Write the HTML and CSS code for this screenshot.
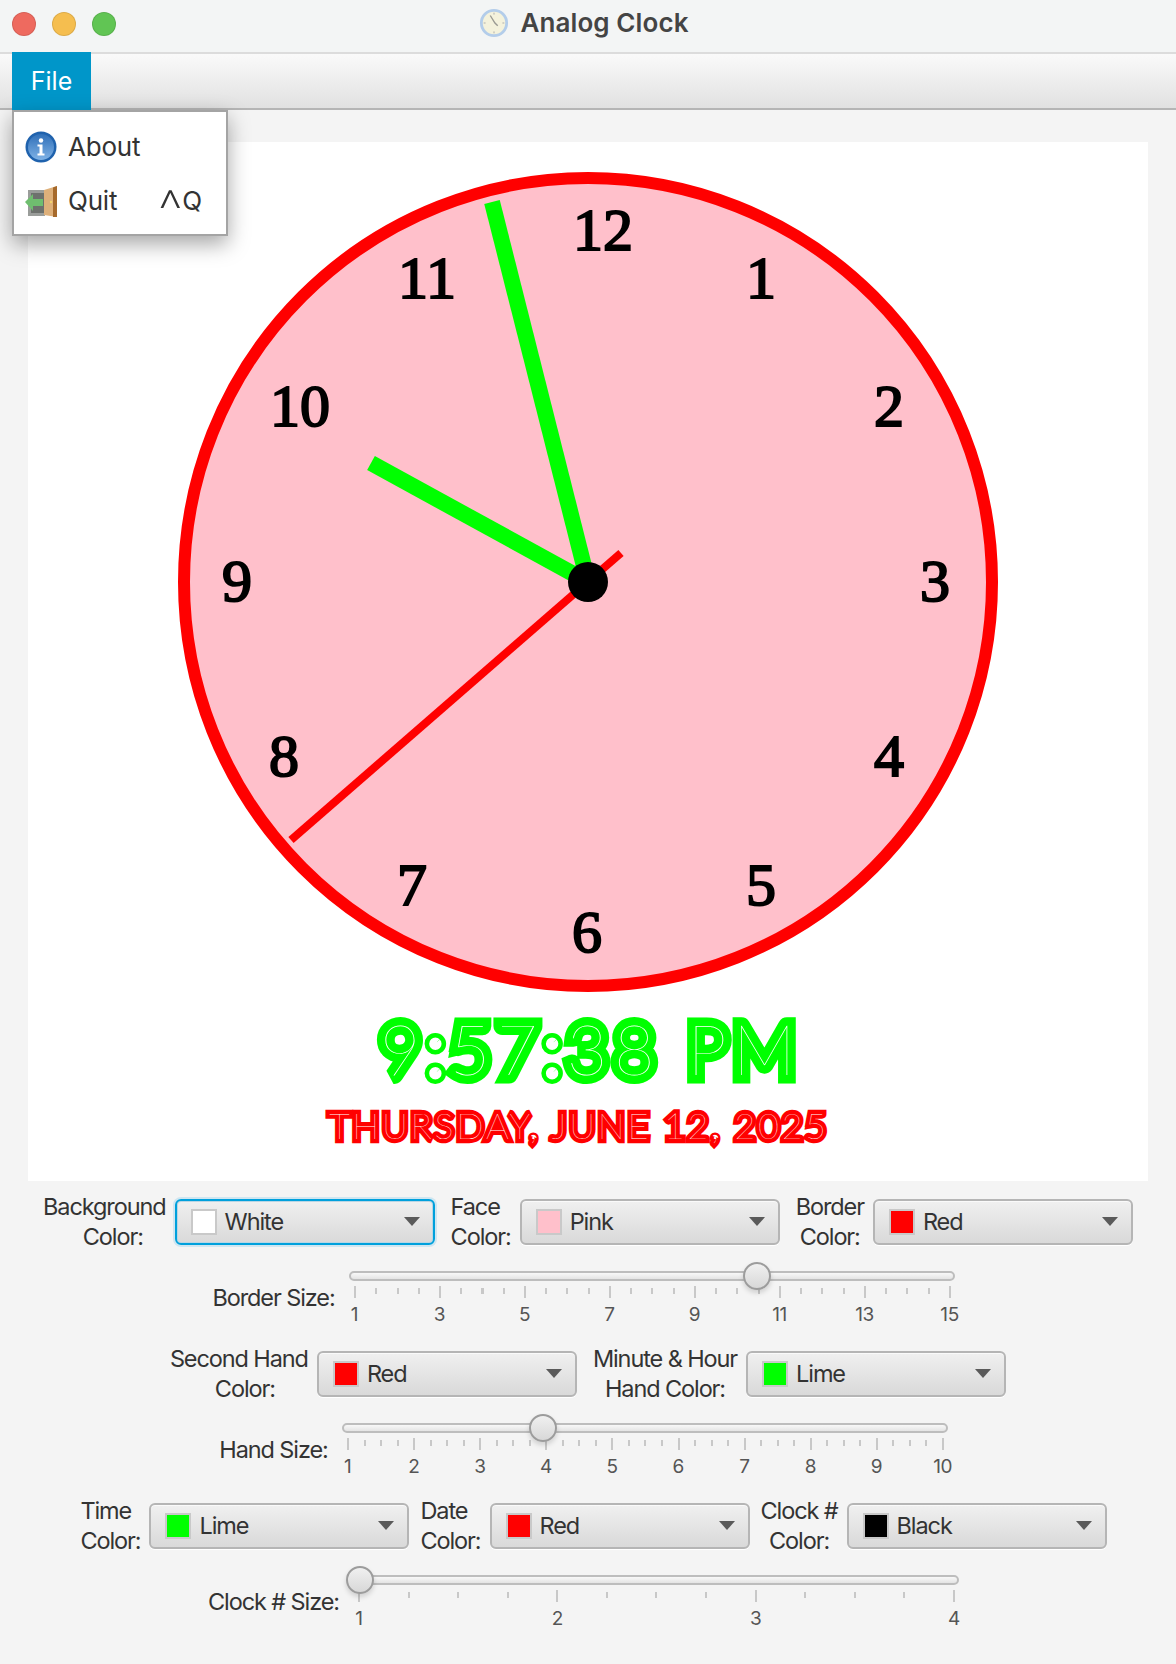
FILE: index.html
```html
<!doctype html>
<html lang="en">
<head>
	<meta charset="utf-8">
	<title>Analog Clock</title>
	<link rel="stylesheet" href="styles.css">
</head>
<body>
	<header class="titlebar">
		<div class="lights">
			<span class="light red"></span>
			<span class="light yellow"></span>
			<span class="light green"></span>
		</div>
		<div class="title">
			<svg class="title-icon" viewBox="0 0 32 32">
				<circle cx="16" cy="16" r="13.5" fill="#f4f2dc" stroke="#b3cdea" stroke-width="3"/>
				<path d="M12 8l5 8 3 3" fill="none" stroke="#9a9a92" stroke-width="1.5"/>
				<path d="M16 5v2M16 25v2M5 16h2M25 16h2" stroke="#aaa" stroke-width="1"/>
			</svg>
			Analog Clock
		</div>
	</header>

	<nav class="menubar">
		<div class="menu-item">File</div>
	</nav>

	<div class="menu">
		<div class="menu-row">
			<svg class="menu-icon" viewBox="0 0 32 32">
				<defs>
					<linearGradient id="info" x1="0" y1="0" x2="0" y2="1">
						<stop offset="0" stop-color="#2f6fb8"/>
						<stop offset="1" stop-color="#7fb2e6"/>
					</linearGradient>
				</defs>
				<circle cx="16" cy="16" r="15.5" fill="#1f62ad"/>
				<circle cx="16" cy="16" r="13" fill="url(#info)"/>
				<circle cx="16" cy="9.5" r="2.2" fill="#fff"/>
				<path d="M12.5 13.5h5v9h2v2h-7v-2h2v-7h-2z" fill="#fff"/>
			</svg>
			<span>About</span>
		</div>
		<div class="menu-row">
			<svg class="menu-icon" viewBox="0 0 32 32">
				<rect x="3" y="5" width="17" height="26" fill="#9a9d9a"/>
				<rect x="6" y="8" width="13" height="20" fill="#6d716d"/>
				<path d="M19 5l13-4v31l-13-2z" fill="#deb07a"/>
				<path d="M28 2.500l4-1.500v31h-4z" fill="#a66a2c"/>
				<circle cx="26" cy="17" r="1.200" fill="#f3d36b"/>
				<path d="M0 17l8-8v5h10v7H8v5z" fill="#6fbe6f"/>
			</svg>
			<span class="menu-label">Quit</span>
			<span class="shortcut"><span class="caret">^</span>Q</span>
		</div>
	</div>

	<main class="content">
		<section class="clock-panel">
			<svg class="clock" viewBox="0 0 820 820">
				<circle class="face" cx="410" cy="410" r="404"/>
				<text class="num" x="425" y="78">12</text>
				<text class="num" x="583" y="126">1</text>
				<text class="num" x="711" y="254">2</text>
				<text class="num" x="757" y="429">3</text>
				<text class="num" x="711" y="604">4</text>
				<text class="num" x="583" y="733">5</text>
				<text class="num" x="409" y="780">6</text>
				<text class="num" x="234" y="733">7</text>
				<text class="num" x="106" y="604">8</text>
				<text class="num" x="59" y="429">9</text>
				<text class="num" x="122" y="254">10</text>
				<text class="num" x="249" y="126">11</text>
				<line class="hand" x1="410" y1="410" x2="314" y2="30"/>
				<line class="hand" x1="410" y1="410" x2="193" y2="291"/>
				<line class="second" x1="443" y1="381" x2="113" y2="668"/>
				<circle cx="410" cy="410" r="20"/>
			</svg>
			<svg class="readout" viewBox="0 0 1120 170">
				<text class="time" x="563" y="83">9:57:38 PM</text>
				<text class="date" x="551" y="147">THURSDAY, JUNE 12, 2025</text>
			</svg>
		</section>

		<section class="controls">
			<div class="combo-row">
				<label class="field">
					<span class="caption">Background<br><span class="shift">Color:</span></span>
					<span class="combo focused"><i class="swatch white"></i>White<b class="arrow"></b></span>
				</label>
				<label class="field">
					<span class="caption left">Face<br>Color:</span>
					<span class="combo"><i class="swatch pink"></i>Pink<b class="arrow"></b></span>
				</label>
				<label class="field">
					<span class="caption">Border<br>Color:</span>
					<span class="combo"><i class="swatch red"></i>Red<b class="arrow"></b></span>
				</label>
			</div>

			<div class="slider-row">
				<span class="caption">Border Size:</span>
				<div class="slider border-size">
					<div class="track"><span class="thumb"></span></div>
					<div class="ticks"></div>
					<div class="tick-labels">
						<span>1</span><span>3</span><span>5</span><span>7</span><span>9</span><span>11</span><span>13</span><span>15</span>
					</div>
				</div>
			</div>

			<div class="combo-row">
				<label class="field">
					<span class="caption">Second Hand<br><span class="shift small">Color:</span></span>
					<span class="combo"><i class="swatch red"></i>Red<b class="arrow"></b></span>
				</label>
				<label class="field">
					<span class="caption">Minute &amp; Hour<br>Hand Color:</span>
					<span class="combo"><i class="swatch lime"></i>Lime<b class="arrow"></b></span>
				</label>
			</div>

			<div class="slider-row">
				<span class="caption">Hand Size:</span>
				<div class="slider hand-size">
					<div class="track"><span class="thumb"></span></div>
					<div class="ticks"></div>
					<div class="tick-labels">
						<span>1</span><span>2</span><span>3</span><span>4</span><span>5</span><span>6</span><span>7</span><span>8</span><span>9</span><span>10</span>
					</div>
				</div>
			</div>

			<div class="combo-row tight">
				<label class="field">
					<span class="caption left">Time<br>Color:</span>
					<span class="combo"><i class="swatch lime"></i>Lime<b class="arrow"></b></span>
				</label>
				<label class="field">
					<span class="caption left">Date<br>Color:</span>
					<span class="combo"><i class="swatch red"></i>Red<b class="arrow"></b></span>
				</label>
				<label class="field">
					<span class="caption">Clock #<br>Color:</span>
					<span class="combo"><i class="swatch black"></i>Black<b class="arrow"></b></span>
				</label>
			</div>

			<div class="slider-row">
				<span class="caption">Clock # Size:</span>
				<div class="slider clock-size">
					<div class="track"><span class="thumb"></span></div>
					<div class="ticks"></div>
					<div class="tick-labels">
						<span>1</span><span>2</span><span>3</span><span>4</span>
					</div>
				</div>
			</div>
		</section>
	</main>
</body>
</html>
```
FILE: styles.css
```css
html, body {
	margin: 0;
	height: 100%;
}

body {
	position: relative;
	width: 1176px;
	height: 1664px;
	overflow: hidden;
	background: #f4f4f4;
	color: #333;
	font: 23.500px/30px Inter, "Noto Sans", sans-serif;
	letter-spacing: -1.1px;
}

.titlebar {
	display: flex;
	align-items: center;
	justify-content: center;
	position: relative;
	height: 52px;
	background: #f3f5f5;
	border-bottom: 2px solid #dcdcdc;
}

.lights {
	position: absolute;
	left: 12px;
	top: 12px;
	display: flex;
	gap: 16px;
}

.light {
	width: 22px;
	height: 22px;
	border-radius: 50%;
	border: 1px solid rgba(0, 0, 0, 0.1);
}

.light.red {background: #ee6a5f}
.light.yellow {background: #f5be4f}
.light.green {background: #61c554}

.title {
	display: flex;
	align-items: center;
	gap: 11px;
	margin: -6px 0 0 -8px;
	font-size: 26px;
	font-weight: 600;
	letter-spacing: 0.1px;
	color: #444;
}

.title-icon {
	width: 30px;
	height: 30px;
}

.menubar {
	display: flex;
	height: 54px;
	padding-left: 12px;
	background: linear-gradient(#fafafa, #e1e1e1);
	border-bottom: 2px solid #b5b5b5;
}

.menu-item {
	width: 79px;
	height: 58px;
	margin-top: -2px;
	line-height: 58px;
	text-align: center;
	background: #0096c9;
	color: #fff;
	font-size: 25px;
	letter-spacing: 0;
	position: relative;
}

.menu {
	position: absolute;
	left: 12px;
	top: 110px;
	width: 216px;
	height: 126px;
	box-sizing: border-box;
	padding: 8px 11px;
	background: #fff;
	border: 2px solid #a4a4a4;
	box-shadow: 0 8px 20px rgba(0, 0, 0, 0.35);
	font-size: 26px;
	letter-spacing: -0.2px;
	z-index: 2;
}

.menu-row {
	display: flex;
	align-items: center;
	gap: 11px;
	height: 54px;
}

.menu-icon {
	width: 32px;
	height: 32px;
	flex-shrink: 0;
}

.menu-label {flex-grow: 1}

.shortcut {margin-right: 13px}

.caret {
	font-size: 58px;
	font-weight: 200;
	line-height: 0;
	vertical-align: -21px;
}

.clock-panel {
	display: flex;
	flex-direction: column;
	align-items: center;
	height: 1039px;
	margin: 32px 28px 0;
	padding-top: 30px;
	box-sizing: border-box;
	background: #fff;
}

.clock {
	display: block;
	width: 820px;
	height: 820px;
	flex-shrink: 0;
}

.face {
	fill: #ffc0cb;
	stroke: #f00;
	stroke-width: 12;
}

.num {
	font: 60px "Liberation Serif", serif;
	letter-spacing: 0;
	text-anchor: middle;
	stroke: #000;
	stroke-width: 2;
}

.hand {
	stroke: #0f0;
	stroke-width: 16;
}

.second {
	stroke: #f00;
	stroke-width: 8;
}

.readout {
	display: block;
	width: 1120px;
	height: 170px;
	flex-shrink: 0;
}

.time, .date {
	font-family: Lato, sans-serif;
	font-weight: 100;
	text-anchor: middle;
	fill: #fff;
	paint-order: stroke fill;
	stroke-miterlimit: 2;
}

.time {
	font-size: 70px;
	letter-spacing: 6.500px;
	stroke: #0f0;
	stroke-width: 17px;
}

.date {
	font-size: 36px;
	letter-spacing: 2.700px;
	stroke: #f00;
	stroke-width: 8.500px;
}

.controls {
	display: flex;
	flex-direction: column;
	gap: 19px;
	padding-top: 11px;
}

.combo-row, .slider-row {
	display: flex;
	justify-content: center;
}

.combo-row {gap: 16px}
.combo-row.tight {gap: 11px; margin-left: 11px}

.field {
	display: flex;
	align-items: center;
	gap: 9px;
}

.caption {
	text-align: center;
	white-space: nowrap;
}

.caption.left {text-align: left}
.shift {padding-left: 17px}
.shift.small {padding-left: 12px}

.combo {
	position: relative;
	display: flex;
	align-items: center;
	gap: 8px;
	width: 260px;
	height: 46px;
	box-sizing: border-box;
	padding-left: 14px;
	border: 2px solid #b5b5b5;
	border-radius: 6px;
	background: linear-gradient(#f0f0f0, #d9d9d9);
	box-shadow: inset 0 1px 0 #fafafa, 0 1px 0 #fff;
}

.combo.focused {
	border-color: #00a0dc;
	box-shadow: inset 0 0 0 1px #b9d6e4, 0 0 0 2px #cfe6f1;
}

.swatch {
	width: 26px;
	height: 26px;
	box-sizing: border-box;
	border: 2px solid #c9c9c9;
}

.swatch.white {background: #fff}
.swatch.pink {background: #ffc0cb}
.swatch.red {background: #f00}
.swatch.lime {background: #0f0}
.swatch.black {background: #000}

.arrow {
	position: absolute;
	right: 13px;
	top: 16px;
	border-style: solid;
	border-width: 9px 8px 0;
	border-color: #5a5a5a transparent transparent;
}

.slider-row {
	gap: 14px;
	align-items: center;
}

.slider {
	width: 606px;
	height: 54px;
	padding-right: 9px;
}

.track {
	position: relative;
	height: 10px;
	box-sizing: border-box;
	border: 2px solid #bdbdbd;
	border-radius: 6px;
	background: linear-gradient(#f8f8f8, #e4e4e4);
}

.thumb {
	position: absolute;
	top: -11px;
	width: 28px;
	height: 28px;
	box-sizing: border-box;
	border: 2px solid #9c9c9c;
	border-radius: 50%;
	background: linear-gradient(#f0f0f0, #d8d8d8);
	box-shadow: 0 3px 5px rgba(0, 0, 0, 0.15);
}

.border-size .thumb {left: 392px}
.hand-size .thumb {left: 185px}
.clock-size .thumb {left: -9px}

.ticks {
	--minor: calc((100% - 2px) / (var(--majors) * 4));
	--major: calc((100% - 2px) / var(--majors));
	height: 12px;
	margin: 5px 4px 0 5px;
	background:
		repeating-linear-gradient(to right, #c8c8c8 0 2px, transparent 2px var(--major)) 0 0 / 100% 12px no-repeat,
		repeating-linear-gradient(to right, #c8c8c8 0 2px, transparent 2px var(--minor)) 0 2px / 100% 6px no-repeat;
}

.border-size .ticks {--majors: 7}
.hand-size .ticks {--majors: 9}
.clock-size .ticks {--majors: 3}

.tick-labels {
	display: flex;
	justify-content: space-between;
	margin: 6px 5px 0 6px;
	font-size: 19px;
	line-height: 22px;
	letter-spacing: -0.3px;
	color: #555;
}

.tick-labels span {
	display: flex;
	justify-content: center;
	width: 0;
}
```
